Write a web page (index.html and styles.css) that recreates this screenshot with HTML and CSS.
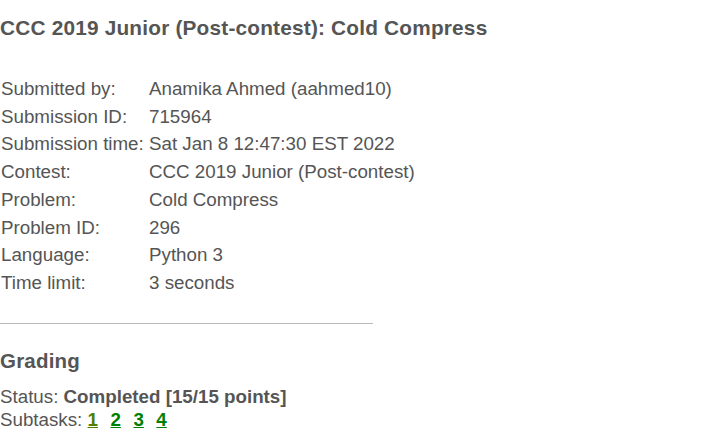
FILE: index.html
```html
<!DOCTYPE html>
<html>
<head>
<meta charset="utf-8">
<link rel="stylesheet" href="styles.css">
</head>
<body>
<h2 class="title">CCC 2019 Junior (Post-contest): Cold Compress</h2>
<table class="info">
<tr><td class="lbl">Submitted by:</td><td>Anamika Ahmed (aahmed10)</td></tr>
<tr><td class="lbl">Submission ID:</td><td>715964</td></tr>
<tr><td class="lbl">Submission time:</td><td>Sat Jan 8 12:47:30 EST 2022</td></tr>
<tr><td class="lbl">Contest:</td><td>CCC 2019 Junior (Post-contest)</td></tr>
<tr><td class="lbl">Problem:</td><td>Cold Compress</td></tr>
<tr><td class="lbl">Problem ID:</td><td>296</td></tr>
<tr><td class="lbl">Language:</td><td>Python 3</td></tr>
<tr><td class="lbl">Time limit:</td><td>3 seconds</td></tr>
</table>
<hr class="sep">
<h2 class="section">Grading</h2>
<div class="line">Status: <b>Completed [15/15 points]</b></div>
<div class="line subtasks">Subtasks: <a class="st first" href="#">1</a><a class="st" href="#">2</a><a class="st" href="#">3</a><a class="st" href="#">4</a></div>
</body>
</html>
```
FILE: styles.css
```css
html, body {
  margin: 0;
  padding: 0;
  background: #fff;
}
body {
  font-family: "Liberation Sans", Arial, sans-serif;
  font-size: 18.75px;
  color: #555;
}
.title {
  font-size: 20.8px;
  font-weight: bold;
  letter-spacing: 0.2px;
  margin: 16px 0 0 0;
  line-height: 24px;
}
.info {
  border-collapse: separate;
  border-spacing: 0 2px;
  margin-top: 34px;
}
.info td {
  padding: 2px 1px;
  line-height: 21.7px;
  white-space: nowrap;
}
.lbl {
  width: 146px;
}
.sep {
  width: 373px;
  margin: 25px 0 0 0;
  border: 0;
  border-top: 1px solid #bbb;
  height: 0;
}
.section {
  font-size: 20.5px;
  font-weight: bold;
  letter-spacing: 0.2px;
  margin: 25px 0 0 0;
  line-height: 24px;
}
.line {
  line-height: 23px;
}
.section + .line {
  margin-top: 12px;
}
.st {
  color: #008000;
  font-weight: bold;
  margin-right: 12.5px;
}
.st.first {
  color: #4f8000;
}
```
